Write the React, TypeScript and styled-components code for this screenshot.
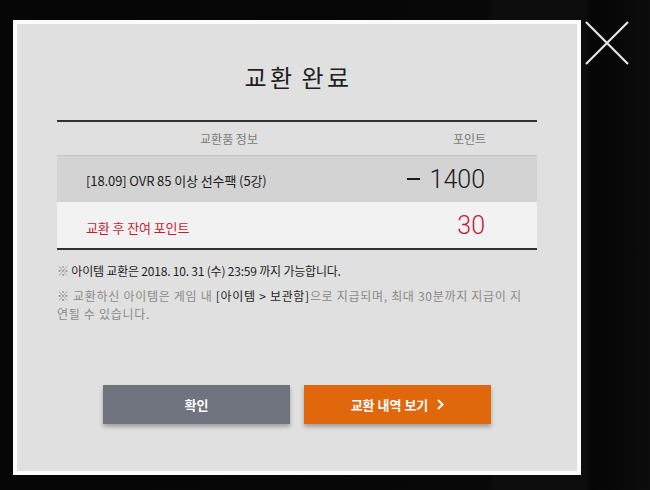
import React from "react";
import styled, { createGlobalStyle } from "styled-components";

const Global = createGlobalStyle`
  html, body { margin: 0; padding: 0; background: #070707; }
  body { font-family: "Noto Sans CJK KR", "Noto Sans", sans-serif; }
  * { box-sizing: border-box; }
`;

const Page = styled.div`
  width: 650px;
  height: 490px;
  overflow: hidden;
  background: linear-gradient(90deg, #060606 0%, #080808 75%, #0d0d0d 76%, #0d0d0d 90%, #050505 91%, #0c0c0c 100%);
  padding: 20px 0 0 13px;
  display: flex;
  align-items: flex-start;
  gap: 3px;
`;

const Modal = styled.div`
  width: 568px;
  height: 455px;
  border: 4px solid #fbfbfb;
  background: #e0e0e0;
  display: flex;
  flex-direction: column;
  align-items: center;
  padding: 38px 40px 0 40px;
`;

const Title = styled.h1`
  margin: 0;
  font-size: 24px;
  line-height: 30px;
  font-weight: 400;
  color: #1e1e1e;
  letter-spacing: 3.5px;
  word-spacing: -3px;
  padding-left: 3px;
`;

const Table = styled.div`
  margin-top: 28px;
  width: 480px;
  border-top: 2px solid #333;
  border-bottom: 2px solid #333;
`;

const HeadRow = styled.div`
  display: grid;
  grid-template-columns: 344px 1fr;
  height: 33px;
  align-items: center;
  font-size: 12px;
  color: #7a7a7a;
`;

const HeadCell = styled.div<{ $align: "center" | "right" }>`
  text-align: ${(p) => p.$align};
  padding-right: ${(p) => (p.$align === "right" ? "51px" : "0")};
`;

const Row = styled.div<{ $bg: string; $topBorder?: boolean; $h: number }>`
  display: flex;
  align-items: center;
  justify-content: space-between;
  height: ${(p) => p.$h}px;
  background: ${(p) => p.$bg};
  border-top: ${(p) => (p.$topBorder ? "1px solid #c4c4c4" : "none")};
  padding: 0 52px 0 29px;
`;

const ItemName = styled.span<{ $red?: boolean }>`
  font-size: 13px;
  color: ${(p) => (p.$red ? "#c31d34" : "#1c1c1c")};
  letter-spacing: -0.1px;
  padding-top: ${(p) => (p.$red ? "4px" : "3px")};
`;

const Points = styled.span<{ $red?: boolean }>`
  font-family: Roboto, "Liberation Sans", sans-serif;
  font-weight: 300;
  font-size: 25px;
  color: ${(p) => (p.$red ? "#c31d34" : "#1a1a1a")};
  display: flex;
  align-items: center;
  gap: 10px;
`;

const Minus = styled.span`
  display: inline-block;
  width: 13px;
  height: 2px;
  background: #1a1a1a;
`;

const Notes = styled.div`
  margin-top: 12px;
  width: 480px;
  font-size: 12px;
`;

const Note = styled.p<{ $gray?: boolean; $gap: number; $spacing: number; $width: number }>`
  margin: ${(p) => p.$gap}px 0 0 0;
  width: ${(p) => p.$width}px;
  line-height: 18px;
  letter-spacing: ${(p) => p.$spacing}px;
  color: ${(p) => (p.$gray ? "#8a8a8a" : "#1e1e1e")};
`;

const Mark = styled.span`
  color: #8a8a8a;
`;

const Strong = styled.span`
  color: #1e1e1e;
`;

const Buttons = styled.div`
  margin-top: 62px;
  display: flex;
  gap: 14px;
`;

const Button = styled.button<{ $bg: string }>`
  width: 187px;
  height: 39px;
  border: none;
  background: ${(p) => p.$bg};
  color: #fff;
  font-family: "Noto Sans CJK KR", sans-serif;
  font-weight: 700;
  font-size: 13px;
  box-shadow: 0 3px 4px rgba(0, 0, 0, 0.28);
  display: flex;
  align-items: center;
  justify-content: center;
  gap: 9px;
  cursor: pointer;
`;

const Close = styled.button`
  width: 46px;
  height: 46px;
  padding: 0;
  border: none;
  background: transparent;
  cursor: pointer;
`;

export default function App() {
  return (
    <>
      <Global />
      <Page>
        <Modal>
          <Title>교환 완료</Title>
          <Table>
            <HeadRow>
              <HeadCell $align="center">교환품 정보</HeadCell>
              <HeadCell $align="right">포인트</HeadCell>
            </HeadRow>
            <Row $bg="#d3d3d3" $topBorder $h={47}>
              <ItemName>[18.09] OVR 85 이상 선수팩 (5강)</ItemName>
              <Points>
                <Minus />
                1400
              </Points>
            </Row>
            <Row $bg="#f2f2f2" $h={46}>
              <ItemName $red>교환 후 잔여 포인트</ItemName>
              <Points $red>30</Points>
            </Row>
          </Table>
          <Notes>
            <Note $gap={0} $spacing={-0.2} $width={480}>
              <Mark>※</Mark> 아이템 교환은 2018. 10. 31 (수) 23:59 까지 가능합니다.
            </Note>
            <Note $gray $gap={7} $spacing={0.7} $width={470}>
              ※ 교환하신 아이템은 게임 내 <Strong>[아이템 &gt; 보관함]</Strong>으로 지급되며, 최대 30분까지 지급이 지연될 수 있습니다.
            </Note>
          </Notes>
          <Buttons>
            <Button $bg="#6f737e">확인</Button>
            <Button $bg="#e0670b">
              교환 내역 보기
              <svg width="7" height="11" viewBox="0 0 7 11">
                <path d="M1 1 L5.5 5.5 L1 10" stroke="#fff" strokeWidth="2" fill="none" />
              </svg>
            </Button>
          </Buttons>
        </Modal>
        <Close aria-label="닫기">
          <svg width="46" height="46" viewBox="0 0 46 46">
            <path d="M2 2 L44 44 M44 2 L2 44" stroke="#e6e6e6" strokeWidth="2.2" />
          </svg>
        </Close>
      </Page>
    </>
  );
}
